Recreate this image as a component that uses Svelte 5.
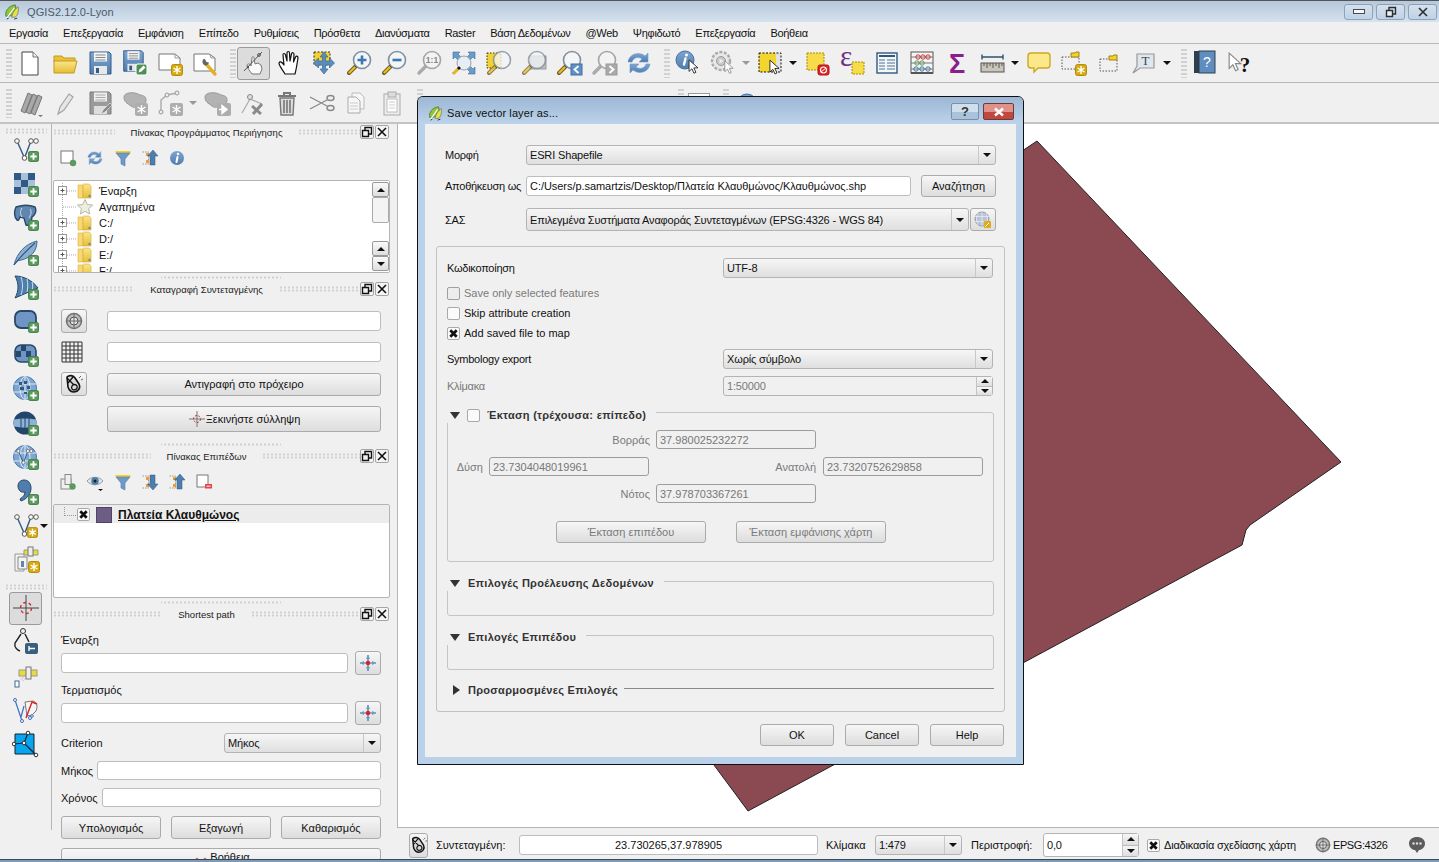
<script lang="ts">
  const menus = ["Εργασία", "Επεξεργασία", "Εμφάνιση", "Επίπεδο", "Ρυθμίσεις", "Πρόσθετα", "Διανύσματα", "Raster", "Βάση Δεδομένων", "@Web", "Ψηφιδωτό", "Επεξεργασία", "Βοήθεια"];

  const toolbarOne = [
    "new", "open", "save", "saveas", "composer", "manager",
    "|", "*pansel", "hand", "panto", "zoomin", "zoomout", "zoom11", "zoomfull", "zoomsel", "zoomlayer", "zoomlast", "zoomnext", "refresh",
    "|", "identify", "action", "v-grey", "select", "v", "deselect", "expr", "table", "stats", "sum", "measure", "v", "annot", "annotnew", "annotmove", "textannot", "v",
    "|", "help", "whatsthis",
  ];
  const toolbarTwo = ["multi", "pencil", "savedit", "addpoly", "addnode", "v-grey", "movefeat", "nodetool", "trash", "cut", "copy", "paste", "|"];

  const sideTop = ["l-vector", "l-raster", "l-pg", "l-feather", "l-sail", "l-round", "l-oracle", "l-wms", "l-wcs", "l-wfs", "l-comma", "l-newv", "l-gps"];
  const sideBottom = ["*l-cross", "l-calip", "l-road", "l-topo", "l-poly"];

  const browserTools = ["b-add", "b-refresh", "b-filter", "b-up", "b-info"];
  const layerTools = ["b-addgroup", "b-eye", "b-filter", "b-down", "b-up", "b-remove"];
  const treeRows = [
    { label: "Έναρξη", icon: "folder", open: true },
    { label: "Αγαπημένα", icon: "star", open: false },
    { label: "C:/", icon: "folder", open: true },
    { label: "D:/", icon: "folder", open: true },
    { label: "E:/", icon: "folder", open: true },
    { label: "F:/", icon: "folder", open: true },
  ];

  // icons that carry a real character sit on top of the symbol
  const glyphs = {
    zoom11: { text: "1:1", x: 17, y: 14, size: 8.5, weight: 700, fill: "#888", family: "Liberation Sans" },
    expr: { text: "ε", x: 8, y: 17, size: 29, weight: 400, fill: "#6d3381", family: "Liberation Serif" },
    sum: { text: "Σ", x: 14, y: 24, size: 27, weight: 700, fill: "#8a1f8c", family: "Liberation Sans" },
    textannot: { text: "T", x: 15.5, y: 16, size: 13, weight: 400, fill: "#444", family: "Liberation Serif" },
    help: { text: "?", x: 16, y: 18, size: 14, weight: 400, fill: "#fff", family: "Liberation Sans" },
    whatsthis: { text: "?", x: 19, y: 23, size: 21, weight: 700, fill: "#111", family: "Liberation Serif" },
  };
</script>

{#snippet ic(name, size = 28)}
  <svg class="ic" width={size} height={size}>
    <use href={"#" + name} />
    {#if glyphs[name]}
      <text x={glyphs[name].x} y={glyphs[name].y} font-size={glyphs[name].size} font-weight={glyphs[name].weight} fill={glyphs[name].fill} font-family={glyphs[name].family} text-anchor="middle">{glyphs[name].text}</text>
    {/if}
  </svg>
{/snippet}

{#snippet toolbar(items)}
  {#each items as item}
    {#if item === "|"}
      <span class="grip-v"></span>
    {:else if item === "v"}
      <span class="drop"><i class="tri"></i></span>
    {:else if item === "v-grey"}
      <span class="drop"><i class="tri grey"></i></span>
    {:else if item.startsWith("*")}
      <span class="tool on">{@render ic(item.slice(1))}</span>
    {:else}
      <span class="tool">{@render ic(item)}</span>
    {/if}
  {/each}
{/snippet}

{#snippet combo(text, cls = "")}
  <div class="combo {cls}">
    <span class="combo-text">{text}</span>
    <span class="combo-arrow"><i class="tri"></i></span>
  </div>
{/snippet}

{#snippet spin(text, cls = "")}
  <div class="spin {cls}">
    <span class="combo-text">{text}</span>
    <span class="spin-arrows"><span><i class="tri up"></i></span><span><i class="tri"></i></span></span>
  </div>
{/snippet}

{#snippet dockTitle(title)}
  <div class="dock-title">
    <span class="grip-h"></span>
    <span class="dock-label">{title}</span>
    <span class="grip-h"></span>
    <span class="float">{@render ic("float", 12)}</span>
    <span class="float">{@render ic("closex", 12)}</span>
  </div>
{/snippet}

{#snippet legend(title, open = true)}
  <span class="legend-arrow" class:closed={!open}></span>
  <span class="legend-title">{title}</span>
{/snippet}

<svg class="defs" width="0" height="0" aria-hidden="true">
  <defs>
    <linearGradient id="gold" x1="0" y1="0" x2="0" y2="1"><stop offset="0" stop-color="#fbe58c" /><stop offset="1" stop-color="#e7bd35" /></linearGradient>
    <linearGradient id="blue" x1="0" y1="0" x2="0" y2="1"><stop offset="0" stop-color="#7fa6d2" /><stop offset="1" stop-color="#4f7cae" /></linearGradient>
  </defs>
  <symbol id="plus" viewBox="0 0 12 12"><rect x=".5" y=".5" width="11" height="11" rx="2" fill="#5b9a5e" stroke="#3f7a44" /><path d="M6 2.5v7M2.5 6h7" stroke="#fff" stroke-width="2" /></symbol>
  <symbol id="snow" viewBox="0 0 12 12"><rect x=".5" y=".5" width="11" height="11" rx="2" fill="#d6aa12" stroke="#b58d08" /><path d="M6 2v8M2.5 4l7 4M9.5 4l-7 4" stroke="#fff" stroke-width="1.4" /></symbol>
  <symbol id="cursor" viewBox="0 0 12 18"><path d="M1 1v13l3.2-3 2.3 5 2.2-1-2.3-5H11z" fill="#fff" stroke="#222" stroke-width="1" /></symbol>
  <symbol id="cursorg" viewBox="0 0 12 18"><path d="M1 1v13l3.2-3 2.3 5 2.2-1-2.3-5H11z" fill="#fff" stroke="#888" stroke-width="1" /></symbol>
  <symbol id="mag" viewBox="0 0 28 28">
    <path d="M11 17l-7 7" stroke="#6b5a1a" stroke-width="4" stroke-linecap="round" />
    <path d="M10.5 17.5l-6 6" stroke="#e9b92c" stroke-width="2.4" stroke-linecap="round" />
    <circle cx="11.5" cy="16.5" r="2" fill="#111" />
    <circle cx="17" cy="11" r="8.5" fill="#f3f5f7" stroke="#80909e" stroke-width="1.6" />
  </symbol>
  <symbol id="magg" viewBox="0 0 28 28">
    <path d="M11 17l-7 7" stroke="#aaa" stroke-width="3.4" stroke-linecap="round" />
    <circle cx="17" cy="11" r="8.5" fill="#f3f3f3" stroke="#a5a5a5" stroke-width="1.6" />
  </symbol>

  <symbol id="new" viewBox="0 0 28 28"><path d="M6 3h11l5 5v18H6z" fill="#fff" stroke="#444" /><path d="M17 3v5h5" fill="#eee" stroke="#777" /></symbol>
  <symbol id="open" viewBox="0 0 28 28"><path d="M3 7h8l2 2h11v4H3z" fill="#e9c23a" stroke="#c29b1f" /><path d="M3 12h23l-3 12H3z" fill="url(#gold)" stroke="#c29b1f" /></symbol>
  <symbol id="floppy" viewBox="0 0 28 28">
    <path d="M4 3h19l2 2v20H4z" fill="url(#blue)" stroke="#345a86" />
    <rect x="8" y="3.5" width="13" height="9" fill="#f4f4f4" /><path d="M9.5 6h10M9.5 8.500h10M9.500 11h10" stroke="#888" />
    <rect x="8" y="17" width="13" height="8" fill="#e8e8e8" /><rect x="10" y="19" width="3" height="5" fill="#345a86" />
  </symbol>
  <symbol id="save" viewBox="0 0 28 28"><use href="#floppy" width="28" height="28" /></symbol>
  <symbol id="saveas" viewBox="0 0 28 28"><use href="#floppy" x="-1" y="-1" width="26" height="26" /><rect x="15" y="15" width="11" height="11" rx="2" fill="#4b8f52" stroke="#fff" /><path d="M17.500 23.500l1-3 4-4 2 2-4 4z" fill="#fff" /></symbol>
  <symbol id="composer" viewBox="0 0 28 28"><path d="M3 5h16l5 4v12H3z" fill="#fff" stroke="#777" /><path d="M19 5v4h5" fill="none" stroke="#999" /><use href="#snow" x="15" y="15" width="12" height="12" /></symbol>
  <symbol id="manager" viewBox="0 0 28 28"><path d="M3 5h15l6 4v13H3z" fill="#fff" stroke="#777" /><path d="M19 5l1 4h4" fill="none" stroke="#999" /><path d="M24 25l-9-10" stroke="#e2b32a" stroke-width="3.4" stroke-linecap="round" /><path d="M13 9.500a4 4 0 0 0 1 7 4 4 0 0 0 4-3l-2.500-.5-1-2z" fill="#666" /></symbol>
  <symbol id="handshape" viewBox="0 0 28 28"><path d="M10 25C8 21 4 17 4 14c1-2 3-1 5 2L8 6c0-2 2-2 2.500 0L12 12V4c0-2 2.500-2 2.500 0L15 12l1.500-7c.5-2 2.500-1.500 2.500.5L18.500 13l2-5c.5-1.500 2.500-1 2.500 1l-1.500 9c-.5 3-1 5-1.500 7z" fill="#fff" stroke="#111" stroke-width="1.200" stroke-linejoin="round" /></symbol>
  <symbol id="pansel" viewBox="0 0 28 28"><path d="M12 25c-2-3-5-6-5-9 1-2 3-1 4 1l1-8c0-2 2-2 2 0l1 6 3-1 3 2 1 4-2 5z" fill="#fafafa" stroke="#777" /><path d="M4 22L22 3" stroke="#555" /><circle cx="8" cy="18" r="1.200" fill="#555" /><circle cx="19" cy="6" r="1.400" fill="none" stroke="#555" /></symbol>
  <symbol id="hand" viewBox="0 0 28 28"><use href="#handshape" width="28" height="28" /></symbol>
  <symbol id="panto" viewBox="0 0 28 28"><rect x="4" y="3" width="16" height="13" fill="#f2d22e" stroke="#333" stroke-dasharray="2 1.500" /><path d="M14 3l4 5h-2.500v4l4-.0V9l5 5-5 5v-3h-4v4H18l-4 5-4-5h2.500v-4h-4v3l-5-5 5-5v3h4V8H10z" fill="#5a8cc2" stroke="#3c6895" stroke-width=".7" /></symbol>
  <symbol id="zoomin" viewBox="0 0 28 28"><use href="#mag" width="28" height="28" /><path d="M17 6.500v9M12.500 11h9" stroke="#3f77b0" stroke-width="2.600" /></symbol>
  <symbol id="zoomout" viewBox="0 0 28 28"><use href="#mag" width="28" height="28" /><path d="M12.500 11h9" stroke="#3f77b0" stroke-width="2.600" /></symbol>
  <symbol id="zoom11" viewBox="0 0 28 28"><use href="#magg" width="28" height="28" /></symbol>
  <symbol id="zoomfull" viewBox="0 0 28 28"><path d="M3 3h7l-2 2 3 3-3 3-3-3-2 2zM25 3v7l-2-2-3 3-3-3 3-3-2-2zM25 25h-7l2-2-3-3 3-3 3 3 2-2zM3 25v-2" fill="#6c9bcb" stroke="#3f6e9f" stroke-width=".6" /><circle cx="14" cy="14" r="7" fill="#e6edf3" stroke="#8fa2b2" /><path d="M9 19l-6 6" stroke="#e2b32a" stroke-width="3" /><circle cx="9" cy="19" r="1.600" fill="#111" /></symbol>
  <symbol id="zoomsel" viewBox="0 0 28 28"><rect x="2" y="4" width="14" height="15" fill="#f2d22e" stroke="#333" stroke-dasharray="1.500 1.500" /><use href="#mag" width="28" height="28" opacity=".8" /></symbol>
  <symbol id="zoomlayer" viewBox="0 0 28 28"><rect x="10" y="7" width="16" height="13" fill="#bdbdbd" stroke="#999" /><use href="#mag" width="28" height="28" opacity=".75" /></symbol>
  <symbol id="zoomlast" viewBox="0 0 28 28"><use href="#mag" width="28" height="28" /><rect x="16" y="15" width="11" height="11" fill="#5f8fc4" stroke="#3f6e9f" /><path d="M23.500 17l-4 3.500 4 3.500" stroke="#fff" stroke-width="1.800" fill="none" /></symbol>
  <symbol id="zoomnext" viewBox="0 0 28 28"><use href="#magg" width="28" height="28" /><rect x="16" y="15" width="11" height="11" fill="#aaa" stroke="#999" /><path d="M19.500 17l4 3.500-4 3.500" stroke="#fff" stroke-width="1.800" fill="none" /></symbol>
  <symbol id="refresh" viewBox="0 0 28 28"><path d="M3 13C4 5 14 2 20 7l3-3v9h-9l3-3C13 7 8 9 7 13z" fill="url(#blue)" stroke="#6f9ccb" stroke-width=".6" /><path d="M25 15c-1 8-11 11-17 6l-3 3v-9h9l-3 3c4 3 9 1 10-3z" fill="url(#blue)" stroke="#6f9ccb" stroke-width=".6" /></symbol>
  <symbol id="identify" viewBox="0 0 28 28"><circle cx="11" cy="11" r="9" fill="url(#blue)" stroke="#42719f" /><path d="M11.500 9.500l-1.500 6" stroke="#fff" stroke-width="2.400" stroke-linecap="round" /><circle cx="12.500" cy="6" r="1.500" fill="#fff" /><use href="#cursor" x="14" y="10" width="11" height="16" /></symbol>
  <symbol id="action" viewBox="0 0 28 28"><circle cx="12" cy="12" r="9" fill="#e8e8e8" stroke="#aaa" stroke-width="2.400" stroke-dasharray="3 1.500" /><circle cx="12" cy="12" r="4.500" fill="#c9c9c9" stroke="#9b9b9b" /><path d="M10.500 9.500l4 2.500-4 2.500z" fill="#eee" /><use href="#cursorg" x="15" y="11" width="10" height="15" /></symbol>
  <symbol id="select" viewBox="0 0 28 28"><rect x="3" y="4" width="22" height="19" fill="#e2e2e2" /><rect x="3" y="4" width="17" height="19" fill="#f2d52f" /><rect x="3" y="4" width="22" height="19" fill="none" stroke="#111" stroke-dasharray="2 1.500" /><use href="#cursor" x="13" y="10" width="11" height="17" /></symbol>
  <symbol id="deselect" viewBox="0 0 28 28"><rect x="4" y="4" width="17" height="17" fill="#f5dc48" stroke="#aa8a10" stroke-dasharray="2 1" /><rect x="15" y="16" width="11" height="10" rx="2" fill="#d22" stroke="#b11" /><circle cx="20.500" cy="21" r="3" fill="none" stroke="#fff" stroke-width="1.200" /><path d="M18 23l5-4" stroke="#fff" /></symbol>
  <symbol id="expr" viewBox="0 0 28 28"><rect x="14" y="13" width="12" height="12" fill="#f5dc48" stroke="#aa8a10" stroke-dasharray="2 1" /></symbol>
  <symbol id="table" viewBox="0 0 28 28"><rect x="4" y="4" width="20" height="20" fill="#f4f6f8" stroke="#2f5a80" stroke-width="1.400" /><path d="M6 7h16" stroke="#2f5a80" stroke-width="2" /><path d="M6 11h6M14 11h8M6 14h6M14 14h8M6 17h6M14 17h8M6 20h6M14 20h8" stroke="#47739a" /></symbol>
  <symbol id="stats" viewBox="0 0 28 28"><rect x="3" y="3" width="22" height="21" fill="#f4f4f4" stroke="#555" /><path d="M3 24h22" stroke="#555" stroke-width="2" /><path d="M3 8h22M3 14h22M3 20h22" stroke="#777" /><circle cx="10" cy="8" r="2.200" fill="none" stroke="#c33" /><circle cx="15" cy="8" r="2.200" fill="none" stroke="#c33" /><circle cx="20" cy="8" r="2.200" fill="none" stroke="#c33" /><circle cx="9" cy="14" r="2.200" fill="none" stroke="#5a9a5a" /><circle cx="14" cy="14" r="2.200" fill="none" stroke="#5a9a5a" /><circle cx="8" cy="20" r="2.200" fill="none" stroke="#3a76a8" /><circle cx="14" cy="20" r="2.200" fill="none" stroke="#3a76a8" /><circle cx="20" cy="20" r="2.200" fill="none" stroke="#3a76a8" /></symbol>
  <symbol id="sum" viewBox="0 0 28 28"></symbol>
  <symbol id="measure" viewBox="0 0 28 28"><path d="M4 8h21M4 5.500v5M25 5.500v5" stroke="#2f5269" stroke-width="1.400" /><rect x="3" y="14" width="23" height="9" fill="#c9c5b8" stroke="#555" /><path d="M6 14v3M9 14v5M12 14v3M15 14v5M18 14v3M21 14v5M24 14v3" stroke="#555" /></symbol>
  <symbol id="annot" viewBox="0 0 28 28"><path d="M6 4h16c2 0 3 1 3 3v9c0 2-1 3-3 3h-9l-4 4v-4H6c-2 0-3-1-3-3V7c0-2 1-3 3-3z" fill="#fbe88a" stroke="#cfa820" stroke-width="1.400" /></symbol>
  <symbol id="annotnew" viewBox="0 0 28 28"><rect x="2" y="8" width="17" height="12" fill="none" stroke="#555" stroke-dasharray="1.500 1.500" /><path d="M11 4h4l1-1h3v5h-8z" fill="#f2d22e" stroke="#a08410" /><use href="#snow" x="15" y="15" width="12" height="12" /></symbol>
  <symbol id="annotmove" viewBox="0 0 28 28"><rect x="5" y="10" width="17" height="12" fill="none" stroke="#555" stroke-dasharray="1.500 1.500" /><path d="M14 7h4l1-1h3v5h-8z" fill="#f2d22e" stroke="#a08410" /></symbol>
  <symbol id="textannot" viewBox="0 0 28 28"><path d="M7 5h17v14H10l-7 5 4-7z" fill="#dfe7ee" stroke="#999" stroke-width="1.200" /></symbol>
  <symbol id="help" viewBox="0 0 28 28"><rect x="3" y="2" width="5" height="22" fill="#2e3e4f" /><rect x="8" y="2" width="16" height="22" fill="#5f8dbf" stroke="#2e3e4f" /></symbol>
  <symbol id="whatsthis" viewBox="0 0 28 28"><use href="#cursorg" x="2" y="3" width="14" height="21" /></symbol>
  <symbol id="peek-doc" viewBox="0 0 28 28"><rect x=".5" y="4.500" width="21" height="18" fill="#fff" stroke="#999" /></symbol>
  <symbol id="peek-ball" viewBox="0 0 28 28"><circle cx="14" cy="15" r="10" fill="url(#blue)" stroke="#42719f" /></symbol>

  <symbol id="multi" viewBox="0 0 28 28"><path d="M5 22L12 4l4 2-7 18zM10 23L17 5l4 2-7 18zM15 24L22 6l4 2-7 18z" fill="#a9a9a9" stroke="#777" /><path d="M22 26h5l-2.500 2z" fill="#777" /></symbol>
  <symbol id="pencil" viewBox="0 0 28 28"><path d="M7 25l2-7L18 5l4 3-9 13z" fill="#e6e6e6" stroke="#a5a5a5" stroke-width="1.200" /></symbol>
  <symbol id="savedit" viewBox="0 0 28 28"><path d="M4 3h19l2 2v20H4z" fill="#9a9a9a" stroke="#7c7c7c" /><rect x="8" y="3.500" width="13" height="9" fill="#efefef" /><path d="M9.500 6h10M9.500 8.500h10M9.500 11h10" stroke="#aaa" /><rect x="8" y="17" width="13" height="8" fill="#ddd" /><path d="M15 25l2-4 7-7 2 2-7 7z" fill="#888" stroke="#eee" stroke-width=".6" /></symbol>
  <symbol id="addpoly" viewBox="0 0 28 28"><path d="M3 8c0-5 10-5 14-3s8 1 8 6-3 4-6 5-5 4-9 1-7-4-7-9z" fill="#b3b3b3" stroke="#999" /><rect x="14" y="14" width="13" height="13" rx="2" fill="#adadad" /><path d="M20.500 16v9M16.500 18l8 5M24.500 18l-8 5" stroke="#fff" stroke-width="1.400" /></symbol>
  <symbol id="addnode" viewBox="0 0 28 28"><path d="M5 23V11l6-5 10-2" fill="none" stroke="#aaa" stroke-width="1.400" /><circle cx="5" cy="23" r="2" fill="#eee" stroke="#999" /><circle cx="11" cy="6" r="2" fill="#eee" stroke="#999" /><circle cx="21" cy="4" r="2" fill="#eee" stroke="#999" /><rect x="14" y="14" width="13" height="13" rx="2" fill="#adadad" /><path d="M20.500 16v9M16.500 18l8 5M24.500 18l-8 5" stroke="#fff" stroke-width="1.400" /></symbol>
  <symbol id="movefeat" viewBox="0 0 28 28"><path d="M2 8c0-5 10-5 14-3s8 1 8 6-3 4-6 5-5 4-9 1-7-4-7-9z" fill="#b3b3b3" stroke="#999" /><rect x="14" y="14" width="14" height="13" rx="2" fill="#adadad" /><path d="M16 20.500h6M19 16.500l5 4-5 4z" fill="#fff" stroke="#fff" stroke-width="1.400" /></symbol>
  <symbol id="nodetool" viewBox="0 0 28 28"><path d="M4 24L12 10l12 5" fill="none" stroke="#aaa" stroke-width="1.200" /><circle cx="12" cy="8" r="2.500" fill="#ddd" stroke="#888" /><path d="M14 17l9 8M24 15l-9 10" stroke="#8a8a8a" stroke-width="3" /></symbol>
  <symbol id="trash" viewBox="0 0 28 28"><path d="M5 7h18M11 7V4h6v3" fill="none" stroke="#777" stroke-width="2" /><path d="M7 9h14l-1 17H8z" fill="#dcdcdc" stroke="#777" stroke-width="1.400" /><path d="M11 11v13M14 11v13M17 11v13" stroke="#777" stroke-width="1.600" /></symbol>
  <symbol id="cut" viewBox="0 0 28 28"><path d="M2 8l17 9M2 20l17-9" stroke="#8a8a8a" stroke-width="1.400" /><ellipse cx="22.500" cy="9" rx="3.500" ry="2.500" fill="none" stroke="#8a8a8a" stroke-width="1.400" /><ellipse cx="22.500" cy="19" rx="3.500" ry="2.500" fill="none" stroke="#8a8a8a" stroke-width="1.400" /></symbol>
  <symbol id="copy" viewBox="0 0 28 28"><path d="M9 4h8l4 4v12H9z" fill="#f6f6f6" stroke="#bbb" /><path d="M5 8h8l4 4v12H5z" fill="#f6f6f6" stroke="#aaa" /><path d="M7 14h8M7 17h8M7 20h8" stroke="#ccc" /></symbol>
  <symbol id="paste" viewBox="0 0 28 28"><rect x="6" y="5" width="16" height="21" fill="#eee" stroke="#aaa" /><rect x="10" y="3" width="8" height="5" fill="#ddd" stroke="#aaa" /><rect x="9" y="10" width="10" height="13" fill="#fff" stroke="#bbb" /><path d="M11 13h6M11 16h6M11 19h6" stroke="#ccc" /></symbol>

  <symbol id="vnodes" viewBox="0 0 28 28"><path d="M5 6l7.500 17L19 6l5 0" fill="none" stroke="#2f5a80" stroke-width="1.400" /><circle cx="5" cy="6" r="2.300" fill="#fff" stroke="#555" /><circle cx="19" cy="6" r="2.300" fill="#fff" stroke="#555" /><circle cx="24" cy="6" r="2.300" fill="#fff" stroke="#555" /><circle cx="12.500" cy="23" r="2.300" fill="#fff" stroke="#555" /></symbol>
  <symbol id="l-vector" viewBox="0 0 28 28"><use href="#vnodes" y="-1" width="28" height="28" /><use href="#plus" x="16" y="15" width="11" height="11" /></symbol>
  <symbol id="l-raster" viewBox="0 0 28 28"><path d="M2 3h7v7H2zM16 3h7v7h-7zM9 10h7v7H9zM2 17h7v7H2z" fill="#2f5a85" /><path d="M9 3h7v7H9zM16 10h7v7h-7zM9 17h7v7H9zM2 10h7v7H2z" fill="#a8c0da" /><use href="#plus" x="16" y="16" width="11" height="11" /></symbol>
  <symbol id="l-pg" viewBox="0 0 28 28"><path d="M4 3c6-2 14-2 19 0 2 4 0 8-3 10l-1 7c-2 1-3 2-5 1l-2-7-4-1c-1 3-2 4-3 3-3-3-3-9-1-13z" fill="#5f86ae" stroke="#28486b" stroke-width="1.400" /><path d="M10 4c-2 3-2 6 0 9M18 5c2 2 1 6-1 9" fill="none" stroke="#cfe0ef" /><use href="#plus" x="16" y="16" width="11" height="11" /></symbol>
  <symbol id="l-feather" viewBox="0 0 28 28"><path d="M2 26C5 14 13 5 25 2c0 10-6 17-16 19l-4 1z" fill="#8dafd1" stroke="#41678f" /><path d="M2 26C9 17 15 11 23 4" fill="none" stroke="#2f5a85" stroke-width="1.200" /><use href="#plus" x="16" y="16" width="11" height="11" /></symbol>
  <symbol id="l-sail" viewBox="0 0 28 28"><path d="M3 3c9 0 18 5 23 12L3 25c4-7 4-15 0-22z" fill="#4f7dac" stroke="#28486b" /><path d="M9 4c2 6 2 12 0 18M15 6c1 5 1 9 0 13M20 9c1 3 1 5 0 8" stroke="#cfe0ef" fill="none" /><use href="#plus" x="16" y="16" width="11" height="11" /></symbol>
  <symbol id="l-round" viewBox="0 0 28 28"><rect x="3" y="4" width="21" height="17" rx="6" fill="#6e95c3" stroke="#28486b" stroke-width="1.800" /><use href="#plus" x="16" y="15" width="11" height="11" /></symbol>
  <symbol id="l-oracle" viewBox="0 0 28 28"><rect x="3" y="4" width="21" height="17" rx="6" fill="#6e95c3" stroke="#28486b" stroke-width="1.600" /><path d="M9 4h5v6H9zM14 10h5v6h-5zM4 10h5v6H4z" fill="#28486b" /><use href="#plus" x="16" y="15" width="11" height="11" /></symbol>
  <symbol id="globe" viewBox="0 0 28 28"><circle cx="13" cy="13" r="11.500" fill="#7ea6d2" stroke="#4d7cab" /><ellipse cx="13" cy="13" rx="5" ry="11.500" fill="none" stroke="#dfeaf4" /><path d="M2 9h22M2 17h22M13 2v22" stroke="#dfeaf4" /></symbol>
  <symbol id="l-wms" viewBox="0 0 28 28"><use href="#globe" width="28" height="28" /><path d="M7 7h3v3H7zM12 6h3v3h-3zM8 12h4v3H8zM15 11h3v3h-3zM12 17h3v2h-3z" fill="#38587a" /><use href="#plus" x="16" y="15" width="11" height="11" /></symbol>
  <symbol id="l-wcs" viewBox="0 0 28 28"><circle cx="13" cy="13" r="11.500" fill="#22456a" /><path d="M2 9.500c7-1.500 15-1.500 22 0v7c-7 1.500-15 1.500-22 0z" fill="#8fb3d8" /><path d="M9 8.500v9M17 8.500v9M13 2v22" stroke="#22456a" /><use href="#plus" x="16" y="15" width="11" height="11" /></symbol>
  <symbol id="l-wfs" viewBox="0 0 28 28"><use href="#globe" width="28" height="28" /><use href="#vnodes" x="3" y="3" width="19" height="19" /><use href="#plus" x="16" y="15" width="11" height="11" /></symbol>
  <symbol id="l-comma" viewBox="0 0 28 28"><path d="M6 8c0-4 3-6 6-6 4 0 7 3 7 8 0 6-4 11-10 13l-1-2c3-2 5-4 5-7-4 1-7-2-7-6z" fill="#4f7dac" stroke="#28486b" /><use href="#plus" x="16" y="16" width="11" height="11" /></symbol>
  <symbol id="l-newv" viewBox="0 0 28 28"><use href="#vnodes" y="-1" width="28" height="28" /><use href="#snow" x="15" y="15" width="11" height="11" /></symbol>
  <symbol id="l-gps" viewBox="0 0 28 28"><path d="M3 8h9v17H3z" fill="none" stroke="#999" /><path d="M6 11h9v12H6z" fill="#f4f4f4" stroke="#888" /><rect x="9" y="15" width="3" height="6" fill="#5f86ae" /><path d="M12 4h14v5H12z" fill="#e6dc3e" stroke="#998" /><rect x="16" y="1" width="5" height="9" fill="#eee" stroke="#777" /><use href="#snow" x="16" y="15" width="12" height="12" /></symbol>
  <symbol id="l-cross" viewBox="0 0 28 28"><path d="M1 14h26M14 1v26" stroke="#444" /><circle cx="14" cy="14" r="5.500" fill="none" stroke="#c03030" stroke-width="1.400" stroke-dasharray="3 2.600" /></symbol>
  <symbol id="l-calip" viewBox="0 0 28 28"><circle cx="11" cy="3" r="2.500" fill="none" stroke="#333" /><path d="M9 6L3 15c-1 4 2 7 5 8M13 6l4 8" fill="none" stroke="#222" stroke-width="1.400" /><rect x="13" y="15" width="13" height="11" rx="2" fill="#395f7f" /><path d="M17 20.500h6M17 18v5" stroke="#fff" stroke-width="1.400" /></symbol>
  <symbol id="l-road" viewBox="0 0 28 28"><rect x="7" y="8" width="18" height="6" fill="#e6dc3e" stroke="#998" /><rect x="14" y="5" width="5" height="12" fill="#eee" stroke="#777" /><rect x="3" y="19" width="4" height="6" fill="#fff" stroke="#3d6a96" /><path d="M8 16l4 3M10 15l4 3" stroke="#ccc" /></symbol>
  <symbol id="l-topo" viewBox="0 0 28 28"><path d="M3 4l7 21M12 10l-3 11" stroke="#3d6fc2" stroke-width="1.200" /><circle cx="3" cy="4" r="1.500" fill="#fff" stroke="#3d6fc2" /><circle cx="10" cy="25" r="1.500" fill="#fff" stroke="#3d6fc2" /><path d="M13 6l8-1c4 1 5 5 3 10l-4 4-5 1z" fill="#f5f5f5" stroke="#777" /><path d="M14 22l6-16 5 2" fill="none" stroke="#d22" stroke-width="1.400" /><circle cx="18" cy="22" r="1.500" fill="#fff" stroke="#3d6fc2" /><circle cx="20" cy="20" r="1.300" fill="#fff" stroke="#3d6fc2" /></symbol>
  <symbol id="l-poly" viewBox="0 0 28 28"><path d="M3 4h19v20H3z" fill="#08a5ef" stroke="#123" /><path d="M16 3l-4 10L2 14M12 13l12 12" stroke="#123" stroke-width="1.200" fill="none" /><circle cx="16" cy="3" r="1.800" fill="#fff" stroke="#333" /><circle cx="2" cy="14" r="1.800" fill="#fff" stroke="#333" /><circle cx="12" cy="13" r="1.800" fill="#fff" stroke="#333" /><circle cx="24" cy="25" r="1.800" fill="#fff" stroke="#333" /></symbol>

  <symbol id="b-add" viewBox="0 0 18 18"><rect x="2" y="2" width="12" height="12" fill="#fff" stroke="#777" /><circle cx="14" cy="14" r="3.200" fill="#5b9a5e" /></symbol>
  <symbol id="b-refresh" viewBox="0 0 28 28"><use href="#refresh" width="28" height="28" /></symbol>
  <symbol id="b-filter" viewBox="0 0 18 18"><path d="M1.500 2h15v2H1.500z" fill="#f2d22e" /><path d="M2 4h14l-5 6v7l-4-2v-5z" fill="#6f9ac6" stroke="#4f7cae" stroke-width=".6" /></symbol>
  <symbol id="b-up" viewBox="0 0 18 18"><path d="M1.500 3h6v12h-6" fill="none" stroke="#999" stroke-dasharray="1.500 1" /><rect x="5" y="4" width="3" height="3" fill="#f29b30" /><rect x="5" y="11" width="3" height="3" fill="#f29b30" /><path d="M12 1l5 6h-3v9h-5V7H6.500z" fill="#4f7dac" stroke="#2f5a85" stroke-width=".5" /></symbol>
  <symbol id="b-down" viewBox="0 0 18 18"><path d="M1.500 3h6v12h-6" fill="none" stroke="#999" stroke-dasharray="1.500 1" /><rect x="5" y="4" width="3" height="3" fill="#f29b30" /><rect x="5" y="11" width="3" height="3" fill="#f29b30" /><path d="M12 17l5-6h-3V2H9v9H6.500z" fill="#4f7dac" stroke="#2f5a85" stroke-width=".5" /></symbol>
  <symbol id="b-info" viewBox="0 0 18 18"><circle cx="9" cy="9" r="7" fill="url(#blue)" /><path d="M9.500 8l-1 5" stroke="#fff" stroke-width="2" stroke-linecap="round" /><circle cx="10" cy="5" r="1.200" fill="#fff" /></symbol>
  <symbol id="b-addgroup" viewBox="0 0 18 18"><rect x="2" y="6" width="10" height="10" fill="none" stroke="#888" /><rect x="6" y="1.500" width="6" height="10" fill="#eee" stroke="#888" /><circle cx="13.500" cy="13.500" r="3.200" fill="#5b9a5e" /></symbol>
  <symbol id="b-eye" viewBox="0 0 18 18"><path d="M1 8c4-5 12-5 16 0-4 5-12 5-16 0z" fill="#dfe6ec" stroke="#999" /><circle cx="9" cy="8" r="3.800" fill="#4f7dac" /><circle cx="9" cy="8" r="1.500" fill="#123" /><path d="M12 16h5l-2.500 2z" fill="#111" /></symbol>
  <symbol id="b-remove" viewBox="0 0 18 18"><rect x="2" y="2" width="11" height="12" fill="#fff" stroke="#777" /><rect x="10" y="11" width="7" height="4.500" fill="#e8434b" /><path d="M11.500 13.200h4" stroke="#fff" /></symbol>

  <symbol id="float" viewBox="0 0 12 12"><path d="M4 1.500h6.500v6.500H4z" fill="none" stroke="#111" stroke-width="1.400" /><path d="M1.500 4.500h6v6h-6z" fill="#f0f0f0" stroke="#111" stroke-width="1.400" /></symbol>
  <symbol id="closex" viewBox="0 0 12 12"><path d="M2 2l8 8M10 2l-8 8" stroke="#111" stroke-width="1.600" /></symbol>
  <symbol id="closew" viewBox="0 0 12 12"><path d="M2 2.500l8 7M10 2.500l-8 7" stroke="#fff" stroke-width="2.400" /></symbol>
  <symbol id="folder" viewBox="0 0 16 16"><path d="M1 2h4l1 1v12H1z" fill="#f7d873" stroke="#dcb03a" stroke-width=".6" /><path d="M6 1h6l2 2v12H6z" fill="url(#gold)" stroke="#d6ab35" stroke-width=".6" /><circle cx="12.500" cy="13" r="1.200" fill="#5f8dbf" /></symbol>
  <symbol id="star" viewBox="0 0 16 16"><path d="M8 .5l2.300 5 5.300.6-4 3.600 1.100 5.300L8 12.300 3.300 15l1.100-5.300-4-3.600 5.300-.6z" fill="#eceee2" stroke="#b5b8a4" /></symbol>
  <symbol id="br-plus" viewBox="0 0 22 16"><path d="M7.500 0v16" stroke="#aaa" stroke-dasharray="1 1" /><path d="M12 8h10" stroke="#aaa" stroke-dasharray="1 1" /><rect x="3.500" y="3.500" width="8" height="8" fill="#fff" stroke="#999" /><path d="M5.500 7.500h4M7.500 5.500v4" stroke="#555" /></symbol>
  <symbol id="br-line" viewBox="0 0 22 16"><path d="M7.500 0v16M8 8h14" stroke="#aaa" stroke-dasharray="1 1" /></symbol>
  <symbol id="qgis" viewBox="0 0 18 18"><path d="M3 14C2 8 6 3 13 2c2 5-1 11-7 12z" fill="#8fc43c" stroke="#3f6e1e" stroke-width=".8" /><path d="M9 15c1-5 4-9 7-11 1 4 0 9-3 11z" fill="#e6e04a" stroke="#556" stroke-width=".6" /><path d="M4 16c3-4 5-7 8-11" stroke="#fff" stroke-width="1.200" /><path d="M4 17l2-1M12 17l3-1" stroke="#222" /></symbol>
  <symbol id="crs" viewBox="0 0 18 18"><circle cx="9" cy="9" r="7.500" fill="#bdbdbd" stroke="#777" stroke-width="1.600" /><circle cx="9" cy="9" r="4" fill="#e6e6e6" stroke="#555" /><path d="M9 1v16M1 9h16" stroke="#666" /></symbol>
  <symbol id="capture" viewBox="0 0 20 20"><path d="M3 3c2-2 6-2 8 1l4 6c2 4-1 8-5 8-3 0-5-2-6-5z" fill="#d8d8d8" stroke="#111" stroke-width="1.600" /><path d="M3 4l7 7M9 3L4 9M8 12c1-2 4-2 5 0s-1 4-3 4-3-2-2-4z" fill="none" stroke="#111" stroke-width="1.300" /><path d="M15 4l2-2M17 6l2-1" stroke="#666" /></symbol>
  <symbol id="bubble" viewBox="0 0 18 18"><path d="M9 1c4.500 0 8 2.500 8 6.500S13.500 14 11 14l-2 3-2-3C4.500 14 1 11.500 1 7.500S4.500 1 9 1z" fill="#5c5c5c" /><circle cx="5.500" cy="7.500" r="1.200" fill="#ddd" /><circle cx="9" cy="7.500" r="1.200" fill="#ddd" /><circle cx="12.500" cy="7.500" r="1.200" fill="#ddd" /></symbol>
  <symbol id="pick" viewBox="0 0 18 18"><path d="M9 1v16M1 9h16" stroke="#3d6fa3" stroke-width="1.200" /><path d="M9 1l2 4H7zM9 17l2-4H7zM1 9l4-2v4zM17 9l-4-2v4z" fill="#6c9bcb" /><circle cx="9" cy="9" r="2.200" fill="#d22" /></symbol>
  <symbol id="crosssmall" viewBox="0 0 18 18"><path d="M1 9h16M9 1v16" stroke="#777" /><circle cx="9" cy="9" r="3.500" fill="none" stroke="#c03030" stroke-dasharray="2 1.500" /></symbol>
  <symbol id="crsedit" viewBox="0 0 18 18"><circle cx="8" cy="8" r="7" fill="#b9c6d2" stroke="#8a98a6" /><path d="M1 5.500h14M1 10.500h14M8 1v14M4 2c-2 4-2 8 0 12M12 2c2 4 2 8 0 12" stroke="#eef" stroke-width=".7" fill="none" /><rect x="10" y="10" width="7" height="7" rx="1" fill="#e0ac1a" /><path d="M11.500 15.500l3.500-3.500" stroke="#fff" /></symbol>
  <symbol id="grid" viewBox="0 0 22 22"><path d="M1 1h20v20H1zM5 1v20M9 1v20M13 1v20M17 1v20M1 5h20M1 9h20M1 13h20M1 17h20" fill="none" stroke="#333" /></symbol>
  <symbol id="xmark" viewBox="0 0 12 12"><path d="M2.500 2.500l7 7M9.500 2.500l-7 7" stroke="#111" stroke-width="3" /></symbol>
  <symbol id="helpbtns" viewBox="0 0 18 18"><path d="M1 11l4-3 4 3 4-3 4 3" fill="none" stroke="#d44" stroke-width="2" /></symbol>
</svg>

<div class="app">
  <header class="titlebar">
    <span class="title-logo">{@render ic("qgis", 17)}</span>
    <span class="title-text">QGIS2.12.0-Lyon</span>
    <span class="win-buttons">
      <span class="win-btn"><i class="min"></i></span>
      <span class="win-btn">{@render ic("float", 12)}</span>
      <span class="win-btn">{@render ic("closex", 12)}</span>
    </span>
  </header>

  <nav class="menubar">
    {#each menus as menu}
      <span>{menu}</span>
    {/each}
  </nav>

  <div class="toolbar">
    <span class="grip-v first"></span>
    {@render toolbar(toolbarOne)}
  </div>
  <div class="toolbar second">
    <span class="grip-v first"></span>
    {@render toolbar(toolbarTwo)}
    <span class="grip-v far"></span>
    <span class="tool">{@render ic("peek-doc")}</span>
    <span class="grip-v near"></span>
    <span class="tool">{@render ic("peek-ball")}</span>
  </div>

  <div class="main">
    <aside class="sidebar">
      <span class="grip-row"></span>
      {#each sideTop as name}
        <span class="side-tool">
          {@render ic(name)}
          {#if name === "l-newv"}<i class="tri side-drop"></i>{/if}
        </span>
      {/each}
      <span class="grip-row lower"></span>
      {#each sideBottom as name}
        {#if name.startsWith("*")}
          <span class="side-tool narrow"><span class="tool on">{@render ic(name.slice(1))}</span></span>
        {:else}
          <span class="side-tool narrow">{@render ic(name)}</span>
        {/if}
      {/each}
    </aside>

    <section class="docks">
      {@render dockTitle("Πίνακας Προγράμματος Περιήγησης")}
      <div class="dock-tools">
        {#each browserTools as name}
          <span>{@render ic(name, 18)}</span>
        {/each}
      </div>
      <div class="tree browser">
        <div class="tree-rows">
          {#each treeRows as row}
            <div class="tree-row">
              {@render ic(row.open ? "br-plus" : "br-line", 22)}
              <span class="tree-icon">{@render ic(row.icon, 16)}</span>
              <span>{row.label}</span>
            </div>
          {/each}
        </div>
        <div class="scrollbar">
          <span class="sb-btn"><i class="tri up"></i></span>
          <span class="sb-thumb"></span>
          <span class="sb-track"></span>
          <span class="sb-btn"><i class="tri up"></i></span>
          <span class="sb-btn"><i class="tri"></i></span>
        </div>
      </div>
      <div class="splitter"></div>

      {@render dockTitle("Καταγραφή Συντεταγμένης")}
      <div class="capture">
        <div class="capture-row">
          <button class="btn square">{@render ic("crs", 18)}</button>
          <input class="field" />
        </div>
        <div class="capture-row second-row">
          <span class="grid-icon">{@render ic("grid", 22)}</span>
          <input class="field" />
        </div>
        <div class="capture-row third-row">
          <button class="btn square">{@render ic("capture", 20)}</button>
          <button class="btn wide">Αντιγραφή στο πρόχειρο</button>
        </div>
        <div class="capture-row fourth-row">
          <span></span>
          <button class="btn wide tall">{@render ic("crosssmall", 18)} Ξεκινήστε σύλληψη</button>
        </div>
      </div>
      <div class="splitter tight"></div>

      {@render dockTitle("Πίνακας Επιπέδων")}
      <div class="dock-tools">
        {#each layerTools as name}
          <span>{@render ic(name, 18)}</span>
        {/each}
      </div>
      <div class="tree layers">
        <div class="layer-row">
          <span class="layer-branch"></span>
          <span class="check small">{@render ic("xmark", 11)}</span>
          <span class="swatch"></span>
          <span class="layer-name">Πλατεία Κλαυθμώνος</span>
        </div>
      </div>
      <div class="splitter"></div>

      {@render dockTitle("Shortest path")}
      <div class="shortest">
        <div class="label-line first-label">Έναρξη</div>
        <div class="pick-row">
          <input class="field" />
          <button class="btn pick">{@render ic("pick", 18)}</button>
        </div>
        <div class="label-line">Τερματισμός</div>
        <div class="pick-row">
          <input class="field" />
          <button class="btn pick">{@render ic("pick", 18)}</button>
        </div>
        <div class="form-row">
          <span>Criterion</span>
          {@render combo("Μήκος", "criterion")}
        </div>
        <div class="form-row thin">
          <span>Μήκος</span>
          <input class="field grow" />
        </div>
        <div class="form-row thin">
          <span>Χρόνος</span>
          <input class="field grow" />
        </div>
        <div class="action-row">
          <button class="btn">Υπολογισμός</button>
          <button class="btn">Εξαγωγή</button>
          <button class="btn">Καθαρισμός</button>
        </div>
        <button class="btn help-btn">{@render ic("helpbtns", 18)} Βοήθεια</button>
      </div>
    </section>

    <div class="workarea">
      <div class="canvas">
        <svg class="map" width="1041" height="704" viewBox="398 124 1041 704">
          <polygon points="1037,141 1341,462 1250,525 1246,530 1242,545 748,811 714,765 600,500 800,300" fill="#8b4a52" stroke="#222" />
        </svg>
      </div>
      <footer class="statusbar">
        <button class="btn status-toggle">{@render ic("capture", 18)}</button>
        <span class="st-coord-label">Συντεταγμένη:</span>
        <input class="field st-coord" value="23.730265,37.978905" />
        <span class="st-scale-label">Κλίμακα</span>
        {@render combo("1:479", "st-scale")}
        <span class="st-rot-label">Περιστροφή:</span>
        {@render spin("0,0", "st-rot")}
        <span class="check st-check">{@render ic("xmark", 11)}</span>
        <span class="st-render">Διαδικασία σχεδίασης χάρτη</span>
        <span class="st-crs">{@render ic("crs", 16)}</span>
        <span class="st-epsg">EPSG:4326</span>
        <span class="st-msg">{@render ic("bubble", 18)}</span>
      </footer>
    </div>
  </div>
  <div class="taskbar"></div>

  <div class="dialog">
    <div class="dialog-title">
      <span class="dialog-logo">{@render ic("qgis", 16)}</span>
      <span>Save vector layer as...</span>
      <span class="dialog-btns">
        <span class="dlg-help">?</span>
        <span class="dlg-close">{@render ic("closew", 12)}</span>
      </span>
    </div>
    <div class="dialog-body">
      <div class="dlg-row r1">
        <span class="dlg-label">Μορφή</span>
        {@render combo("ESRI Shapefile", "grow")}
      </div>
      <div class="dlg-row r2">
        <span class="dlg-label">Αποθήκευση ως</span>
        <input class="field path" value="C:/Users/p.samartzis/Desktop/Πλατεία Κλαυθμώνος/Κλαυθμώνος.shp" />
        <button class="btn browse">Αναζήτηση</button>
      </div>
      <div class="dlg-row r3">
        <span class="dlg-label">ΣΑΣ</span>
        {@render combo("Επιλεγμένα Συστήματα Αναφοράς Συντεταγμένων (EPSG:4326 - WGS 84)", "grow tall-combo")}
        <button class="btn crs-btn">{@render ic("crsedit", 18)}</button>
      </div>

      <div class="options">
        <div class="opt-row">
          <span>Κωδικοποίηση</span>
          {@render combo("UTF-8", "opt-combo")}
        </div>
        <div class="check-row dim first-check"><span class="check disabled"></span>Save only selected features</div>
        <div class="check-row"><span class="check"></span>Skip attribute creation</div>
        <div class="check-row"><span class="check">{@render ic("xmark", 11)}</span>Add saved file to map</div>
        <div class="opt-row symb">
          <span>Symbology export</span>
          {@render combo("Χωρίς σύμβολο", "opt-combo")}
        </div>
        <div class="opt-row scale">
          <span class="dim">Κλίμακα</span>
          {@render spin("1:50000", "opt-combo dim")}
        </div>

        <div class="cgroup extent">
          <div class="cg-legend">
            <span class="legend-arrow"></span>
            <span class="check legend-check"></span>
            <span class="legend-title">Έκταση (τρέχουσα: επίπεδο)</span>
          </div>
          <div class="extent-grid dim">
            <span class="lbl-north">Βορράς</span>
            <input class="field off north" value="37.980025232272" disabled />
            <span class="lbl-west">Δύση</span>
            <input class="field off west" value="23.7304048019961" disabled />
            <span class="lbl-east">Ανατολή</span>
            <input class="field off east" value="23.7320752629858" disabled />
            <span class="lbl-north">Νότος</span>
            <input class="field off north" value="37.978703367261" disabled />
          </div>
          <div class="extent-btns">
            <button class="btn dim">Έκταση επιπέδου</button>
            <button class="btn dim">Έκταση εμφάνισης χάρτη</button>
          </div>
        </div>

        <div class="cgroup short">
          <div class="cg-legend">{@render legend("Επιλογές Προέλευσης Δεδομένων")}</div>
        </div>
        <div class="cgroup short">
          <div class="cg-legend">{@render legend("Επιλογές Επιπέδου")}</div>
        </div>
        <div class="cg-closed">
          {@render legend("Προσαρμοσμένες Επιλογές", false)}
          <span class="cg-line"></span>
        </div>
      </div>

      <div class="dialog-actions">
        <button class="btn">OK</button>
        <button class="btn">Cancel</button>
        <button class="btn">Help</button>
      </div>
    </div>
  </div>
</div>

<style>
  :global(body) {
    margin: 0;
    background: #f0f0f0;
  }

  .defs {
    position: absolute;
  }

  .app {
    --font: "Liberation Sans", Arial, sans-serif;
    position: relative;
    display: flex;
    flex-direction: column;
    width: 1439px;
    height: 862px;
    overflow: hidden;
    background: #f0f0f0;
    color: #111;
    font-family: var(--font);
    font-size: 11px;
  }

  .ic {
    display: block;
    flex: none;
    overflow: visible;
  }

  button,
  input {
    font-family: var(--font);
    font-size: 11px;
    color: #111;
    margin: 0;
    box-sizing: border-box;
  }

  .titlebar {
    display: flex;
    align-items: center;
    flex: none;
    height: 22px;
    box-sizing: border-box;
    border-top: 1px solid #555;
    background: linear-gradient(#b6c8db, #d5e2ee);
    color: #4a5a6a;
    font-size: 11px;
    letter-spacing: 0.1px;
  }

  .title-logo {
    margin: 0 7px 0 3px;
  }

  .win-buttons {
    display: flex;
    gap: 3px;
    margin-left: auto;
    margin-right: 2px;
  }

  .win-btn {
    display: flex;
    align-items: center;
    justify-content: center;
    width: 29px;
    height: 16px;
    box-sizing: border-box;
    border: 1px solid #8599b2;
    border-radius: 3px;
    background: linear-gradient(#d9e5f1, #bcd0e5);
    opacity: 0.85;
  }

  .win-btn .min {
    display: block;
    width: 10px;
    height: 3px;
    border: 1px solid #333;
    background: #fff;
  }

  .menubar {
    display: flex;
    align-items: center;
    flex: none;
    gap: 15px;
    height: 22px;
    padding-left: 9px;
    padding-top: 1px;
    box-sizing: border-box;
    border-bottom: 1px solid #b9b9b9;
    letter-spacing: -0.3px;
  }

  .toolbar {
    display: flex;
    align-items: center;
    flex: none;
    height: 38px;
    padding-left: 6px;
    border-bottom: 1px solid #b9b9b9;
  }

  .toolbar.second {
    height: 39px;
    border-bottom: 2px solid #c4c4c4;
  }

  .tool {
    display: flex;
    align-items: center;
    justify-content: center;
    width: 35px;
    height: 34px;
    box-sizing: border-box;
  }

  .tool.on {
    width: 33px;
    height: 33px;
    margin: 0 1px;
    border: 1px solid #9a9a9a;
    border-radius: 3px;
    background: #dcdcdc;
  }

  .drop {
    display: flex;
    align-items: center;
    justify-content: center;
    width: 12px;
  }

  .tri {
    display: block;
    width: 0;
    height: 0;
    border-left: 4px solid transparent;
    border-right: 4px solid transparent;
    border-top: 4px solid #111;
  }

  .tri.grey {
    border-top-color: #999;
  }

  .tri.up {
    border-top: 0;
    border-bottom: 4px solid #111;
  }

  .grip-v {
    flex: none;
    width: 6px;
    height: 30px;
    margin-left: 8px;
    background-image: radial-gradient(circle, #cfcfcf 1.100px, transparent 1.300px);
    background-size: 3px 4px;
  }

  .grip-v.first {
    margin-left: 0;
  }

  .grip-v.far {
    margin-left: 255px;
  }

  .grip-v.near {
    margin-left: 4px;
  }

  .grip-h,
  .grip-row {
    background-image: radial-gradient(circle, #d0d0d0 1px, transparent 1.200px);
    background-size: 4px 3px;
  }

  .grip-h {
    flex: 1;
    height: 6px;
  }

  .main {
    display: flex;
    flex: 1;
    min-height: 0;
  }

  .sidebar {
    display: flex;
    flex-direction: column;
    align-items: center;
    flex: none;
    width: 51px;
    height: 706px;
    box-sizing: content-box;
    border-right: 1px solid #b5b5b5;
  }

  .grip-row {
    flex: none;
    width: 42px;
    height: 6px;
    margin-top: 4px;
    margin-bottom: -1px;
  }

  .grip-row.lower {
    margin-top: 7px;
    margin-bottom: 1px;
  }

  .side-tool {
    position: relative;
    display: flex;
    align-items: center;
    justify-content: center;
    flex: none;
    width: 100%;
    height: 34.200px;
  }

  .side-tool.narrow {
    height: 34px;
  }

  .side-drop {
    position: absolute;
    top: 15px;
    right: 3px;
  }

  .docks {
    display: flex;
    flex-direction: column;
    flex: none;
    width: 345px;
    height: 738px;
    box-sizing: border-box;
    overflow: hidden;
    padding-left: 1px;
    padding-right: 8px;
  }

  .dock-title {
    display: flex;
    align-items: center;
    flex: none;
    height: 16px;
  }

  .dock-label {
    margin: 0 16px;
    font-size: 9.500px;
    color: #222;
  }

  .float {
    display: flex;
    align-items: center;
    justify-content: center;
    flex: none;
    width: 14px;
    height: 14px;
    border: 1px solid #a5a5a5;
    border-radius: 2px;
    box-sizing: border-box;
    background: #f4f4f4;
  }

  .float:first-of-type {
    margin-left: 4px;
  }

  .dock-title .float + .float {
    margin-left: 1px;
  }

  .dock-tools {
    display: flex;
    align-items: center;
    flex: none;
    gap: 9.300px;
    height: 26px;
    margin-top: 5px;
    padding-left: 6px;
  }

  .tree {
    flex: none;
    box-sizing: border-box;
    margin-top: 9px;
    margin-right: -1px;
    border: 1px solid #b4b4b4;
    border-radius: 2px;
    background: #fff;
    overflow: hidden;
  }

  .tree.browser {
    display: flex;
    height: 93px;
  }

  .tree.layers {
    height: 94px;
  }

  .tree-rows {
    flex: 1;
    padding-top: 2px;
    padding-left: 1px;
    overflow: hidden;
  }

  .tree-row {
    display: flex;
    align-items: center;
    height: 16px;
  }

  .tree-icon {
    margin: 0 6px 0 0;
  }

  .scrollbar {
    display: flex;
    flex-direction: column;
    flex: none;
    width: 17px;
    padding: 1px 0;
    background: #fff;
  }

  .sb-btn {
    display: flex;
    align-items: center;
    justify-content: center;
    flex: none;
    height: 15px;
    box-sizing: border-box;
    border: 1px solid #999;
    border-radius: 2px;
    background: linear-gradient(#fafafa, #dedede);
  }

  .sb-thumb {
    flex: none;
    height: 26px;
    box-sizing: border-box;
    border: 1px solid #aaa;
    border-radius: 2px;
    background: #f4f4f4;
  }

  .sb-track {
    flex: 1;
    background-image: radial-gradient(#bbb 0.500px, transparent 0.700px);
    background-size: 2px 2px;
  }

  .splitter {
    flex: none;
    height: 8px;
    background-image: radial-gradient(circle, #d0d0d0 1px, transparent 1.200px);
    background-size: 4px 3px;
    background-repeat: repeat-x;
    background-position: center;
    background-clip: content-box;
    padding: 0 108px;
  }

  .splitter.tight {
    margin-top: 8px;
  }

  .capture {
    flex: none;
    margin-top: 12px;
    padding-left: 8px;
    padding-right: 0;
  }

  .capture-row {
    display: grid;
    grid-template-columns: 46px 274px;
    align-items: center;
    height: 24px;
  }

  .capture-row.second-row {
    height: 21px;
    margin-top: 8px;
  }

  .capture-row.third-row {
    margin-top: 10px;
  }

  .capture-row.fourth-row {
    height: 26px;
    margin-top: 10px;
  }

  .field {
    display: block;
    height: 20px;
    padding: 0 3px;
    border: 1px solid #bdbdbd;
    border-radius: 3px;
    background: #fff;
    outline: none;
  }

  .btn {
    border: 1px solid #ababab;
    border-radius: 3px;
    background: linear-gradient(#f6f6f6, #dddddd);
    padding: 0;
  }

  .btn.square {
    display: flex;
    align-items: center;
    justify-content: center;
    width: 26px;
    height: 24px;
  }

  .btn.wide {
    display: flex;
    align-items: center;
    justify-content: center;
    height: 23px;
    font-size: 11px;
  }

  .btn.tall {
    height: 26px;
  }

  .grid-icon {
    display: block;
  }

  .capture-row .field {
    width: 100%;
  }

  .layer-row {
    display: flex;
    align-items: center;
    height: 18px;
    box-sizing: border-box;
    padding-top: 1px;
    background: #ececec;
  }

  .layer-branch {
    width: 11px;
    height: 8px;
    margin: -6px 1px 0 10px;
    border-left: 1px dotted #999;
    border-bottom: 1px dotted #999;
  }

  .check {
    display: flex;
    align-items: center;
    justify-content: center;
    flex: none;
    width: 13px;
    height: 13px;
    box-sizing: border-box;
    border: 1px solid #a9a9a9;
    border-radius: 2px;
    background: #fafafa;
  }

  .check.disabled {
    background: #ededed;
    border-color: #9f9f9f;
  }

  .swatch {
    flex: none;
    width: 16px;
    height: 16px;
    margin-left: 6px;
    box-sizing: border-box;
    border: 1px solid #4f4566;
    background: #6d5d85;
  }

  .layer-name {
    margin-left: 6px;
    font-size: 12px;
    font-weight: 700;
    text-decoration: underline;
  }

  .shortest {
    display: flex;
    flex-direction: column;
    flex: none;
    margin-top: 10px;
    padding-left: 8px;
    width: 320px;
  }

  .label-line {
    height: 16px;
    line-height: 16px;
    margin-top: 7px;
  }

  .label-line.first-label {
    margin-top: 0;
  }

  .pick-row {
    display: flex;
    align-items: center;
    justify-content: space-between;
    height: 24px;
    margin-top: 3px;
  }

  .pick-row .field {
    width: 287px;
  }

  .btn.pick {
    display: flex;
    align-items: center;
    justify-content: center;
    width: 26px;
    height: 24px;
  }

  .form-row {
    display: flex;
    align-items: center;
    gap: 4px;
    height: 20px;
    margin-top: 8px;
  }

  .form-row.thin {
    height: 19px;
  }

  .form-row.thin .field {
    height: 19px;
  }

  .form-row .grow {
    flex: 1;
  }

  .action-row {
    display: flex;
    gap: 10px;
    margin-top: 9px;
  }

  .action-row .btn {
    width: 100px;
    height: 23px;
  }

  .help-btn {
    display: flex;
    align-items: flex-start;
    justify-content: center;
    height: 34px;
    margin-top: 9px;
    padding-top: 2px;
  }

  .combo,
  .spin {
    display: flex;
    align-items: center;
    height: 20px;
    box-sizing: border-box;
    border: 1px solid #b4b4b4;
    border-radius: 3px;
    background: linear-gradient(#f6f6f6, #dfdfdf);
    white-space: nowrap;
  }

  .combo-text {
    flex: 1;
    min-width: 0;
    padding-left: 3px;
    letter-spacing: -0.15px;
  }

  .combo-arrow {
    display: flex;
    align-items: center;
    justify-content: center;
    flex: none;
    align-self: stretch;
    width: 16px;
    border-left: 1px solid #c8c8c8;
  }

  .spin {
    background: #f0f0f0;
  }

  .spin-arrows {
    display: flex;
    flex-direction: column;
    flex: none;
    align-self: stretch;
    width: 15px;
    border-left: 1px solid #c4c4c4;
  }

  .spin-arrows span {
    display: flex;
    flex: 1;
    align-items: center;
    justify-content: center;
    background: linear-gradient(#f6f6f6, #dedede);
  }

  .spin-arrows span + span {
    border-top: 1px solid #bbb;
  }

  .combo.criterion {
    width: 157px;
    margin-left: auto;
  }

  .grow {
    flex: 1;
    min-width: 0;
  }

  .workarea {
    display: flex;
    flex-direction: column;
    flex: 1;
    min-width: 0;
  }

  .canvas {
    flex: none;
    height: 704px;
    box-sizing: border-box;
    border-left: 1px solid #b5b5b5;
    border-bottom: 1px solid #b5b5b5;
    background: #fff;
    overflow: hidden;
  }

  .map {
    display: block;
  }

  .statusbar {
    display: flex;
    align-items: center;
    flex: none;
    height: 34px;
    padding-left: 12px;
  }

  .btn.status-toggle {
    display: flex;
    align-items: center;
    justify-content: center;
    flex: none;
    width: 19px;
    height: 25px;
  }

  .st-coord-label {
    margin-left: 8px;
    width: 83px;
  }

  .field.st-coord {
    width: 299px;
    text-align: center;
  }

  .st-scale-label {
    margin-left: 8px;
    width: 49px;
  }

  .st-scale {
    width: 87px;
    flex: none;
  }

  .st-rot-label {
    margin-left: 9px;
    width: 72px;
  }

  .spin.st-rot {
    width: 96px;
    height: 24px;
    background: #fff;
  }

  .st-check {
    margin-left: 8px;
  }

  .st-render {
    margin-left: 4px;
    width: 143px;
    white-space: nowrap;
    letter-spacing: -0.2px;
  }

  .st-crs {
    margin-left: 8px;
  }

  .st-epsg {
    margin-left: 2px;
    letter-spacing: -0.4px;
  }

  .st-msg {
    margin-left: auto;
    margin-right: 13px;
  }

  .taskbar {
    position: absolute;
    left: 0;
    right: 0;
    bottom: 0;
    height: 2px;
    border-top: 1px solid #3a4a5a;
    background: #7d9ab8;
  }

  .dialog {
    position: absolute;
    left: 417px;
    top: 96px;
    width: 607px;
    height: 669px;
    box-sizing: border-box;
    display: flex;
    flex-direction: column;
    border: 1px solid #111;
    border-radius: 6px 6px 0 0;
    background: #b9d2ea;
  }

  .dialog-title {
    display: flex;
    align-items: center;
    flex: none;
    height: 27px;
    box-sizing: border-box;
    padding-top: 5px;
    padding-left: 9px;
    border-radius: 5px 5px 0 0;
    background: linear-gradient(#9cb7d5, #bcd3ea);
    font-size: 11px;
    letter-spacing: 0.1px;
  }

  .dialog-logo {
    margin-right: 4px;
  }

  .dialog-btns {
    display: flex;
    gap: 4px;
    margin-left: auto;
    margin-right: 9px;
    margin-top: -3px;
  }

  .dlg-help,
  .dlg-close {
    display: flex;
    align-items: center;
    justify-content: center;
    height: 17px;
    box-sizing: border-box;
    border: 1px solid #7f8ea3;
    border-radius: 2px;
  }

  .dlg-help {
    width: 28px;
    background: linear-gradient(#cfdfee 50%, #a9c3dd 50%);
    color: #333;
    font-size: 13px;
    font-weight: 700;
  }

  .dlg-close {
    width: 31px;
    border-color: #6d3a3a;
    background: linear-gradient(#e0928a 50%, #c2473e 50%);
  }

  .dialog-body {
    display: flex;
    flex-direction: column;
    flex: 1;
    min-height: 0;
    margin: 0 7px 7px;
    padding: 21px 20px 0;
    background: #f0f0f0;
  }

  .dlg-row {
    display: flex;
    align-items: center;
    flex: none;
  }

  .dlg-label {
    flex: none;
    width: 81px;
    white-space: nowrap;
    letter-spacing: -0.25px;
  }

  .dlg-row.r1 {
    height: 20px;
  }

  .dlg-row.r2 {
    height: 22px;
    margin-top: 10px;
  }

  .dlg-row.r3 {
    height: 23px;
    margin-top: 11px;
  }

  .field.path {
    width: 385px;
    padding-left: 3px;
    letter-spacing: -0.05px;
  }

  .btn.browse {
    width: 75px;
    height: 22px;
    margin-left: 10px;
  }

  .tall-combo {
    height: 23px;
  }

  .btn.crs-btn {
    display: flex;
    align-items: center;
    justify-content: center;
    flex: none;
    width: 26px;
    height: 23px;
    margin-left: 1px;
  }

  .options {
    display: flex;
    flex-direction: column;
    flex: none;
    height: 466px;
    box-sizing: border-box;
    margin: 15px -9px 0;
    padding: 11px 10px 0;
    border: 1px solid #c2c2c2;
    border-radius: 3px;
  }

  .opt-row {
    display: flex;
    align-items: center;
    justify-content: space-between;
    height: 20px;
    flex: none;
  }

  .opt-row > span {
    letter-spacing: -0.25px;
  }

  .opt-combo {
    width: 270px;
    flex: none;
    margin-right: 1px;
  }

  .opt-row.symb {
    margin-top: 6px;
  }

  .opt-row.scale {
    margin-top: 7px;
  }

  .dim {
    color: #7a7a7a;
  }

  .check-row {
    display: flex;
    align-items: center;
    gap: 4px;
    height: 20px;
    flex: none;
  }

  .check-row.first-check {
    margin-top: 5px;
  }

  .cgroup {
    flex: none;
    box-sizing: border-box;
    border: 1px solid #c4c4c4;
    border-radius: 3px;
  }

  .cgroup.extent {
    height: 150px;
    margin-top: 16px;
  }

  .cgroup.short {
    height: 35px;
    margin-top: 19px;
  }

  .cgroup.short .cg-legend {
    margin-top: -7px;
  }

  .cg-legend {
    display: inline-flex;
    align-items: center;
    height: 16px;
    margin: -6px 0 0 -1px;
    padding-left: 3px;
    padding-right: 10px;
    background: #f0f0f0;
    vertical-align: top;
  }

  .legend-arrow {
    display: block;
    flex: none;
    width: 0;
    height: 0;
    border-left: 5px solid transparent;
    border-right: 5px solid transparent;
    border-top: 7px solid #333;
    margin-right: 8px;
  }

  .legend-arrow.closed {
    border-top: 5px solid transparent;
    border-bottom: 5px solid transparent;
    border-left: 7px solid #333;
    border-right: 0;
    margin-left: 6px;
    margin-right: 8px;
  }

  .legend-check {
    margin-left: -1px;
    margin-right: 7px;
  }

  .legend-title {
    font-weight: 700;
    color: #333;
    letter-spacing: 0.28px;
  }

  .extent-grid {
    display: grid;
    grid-template-columns: 41px 160px 7px 160px 7px 160px;
    grid-auto-rows: 19px;
    gap: 8px 0;
    align-items: center;
    margin-top: 5px;
  }

  .field.off {
    width: 160px;
    height: 19px;
    border: 1px solid #9c9c9c;
    background: #f0f0f0;
    color: #777;
  }

  .lbl-north {
    grid-column: 1 / 3;
    text-align: right;
    padding-right: 0;
    margin-right: -1px;
  }

  .north {
    grid-column: 4;
  }

  .lbl-west {
    grid-column: 1;
    text-align: right;
    padding-right: 6px;
  }

  .west {
    grid-column: 2;
  }

  .lbl-east {
    grid-column: 3 / 5;
    text-align: right;
  }

  .east {
    grid-column: 6;
  }

  .extent-btns {
    display: flex;
    gap: 30px;
    margin: 18px 0 0 108px;
  }

  .extent-btns .btn {
    width: 150px;
    height: 22px;
    color: #7a7a7a;
  }

  .cg-closed {
    display: flex;
    align-items: center;
    flex: none;
    height: 16px;
    margin-top: 12px;
  }

  .cg-line {
    flex: 1;
    margin: -3px 0 0 6px;
    border-top: 1px solid #8a8a8a;
  }

  .dialog-actions {
    display: flex;
    justify-content: flex-end;
    gap: 11px;
    flex: none;
    margin: 12px -8px 0 0;
  }

  .dialog-actions .btn {
    width: 74px;
    height: 22px;
  }
</style>
